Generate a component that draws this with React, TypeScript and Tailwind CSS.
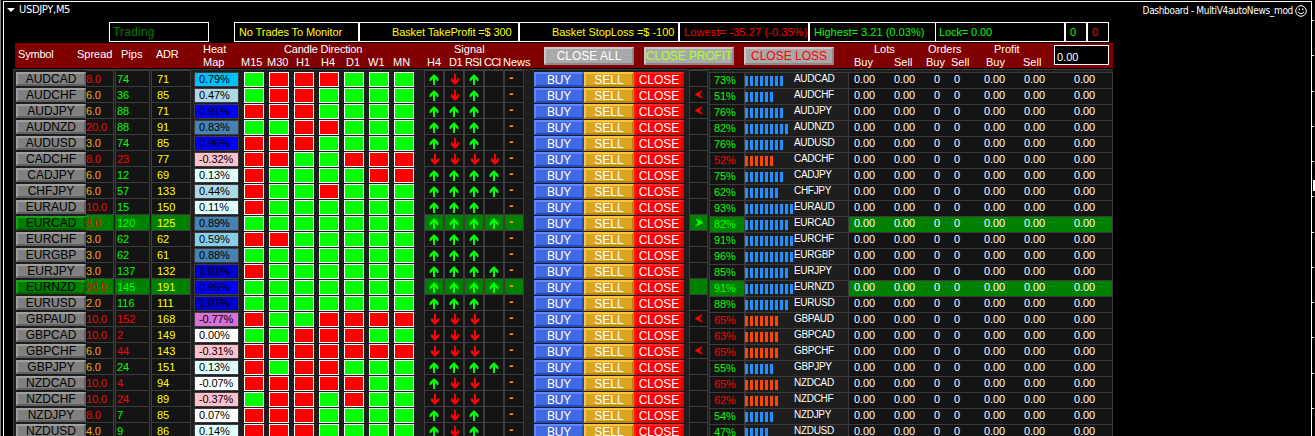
import clsx from 'clsx'

type Dir = 'left' | 'right' | ''

interface Pair {
  symbol: string
  spread: string
  pips: number
  adr: number
  change: string
  heat: string
  candles: string
  signals: string
  strength: number
  down?: boolean
  alert?: Dir
  active?: boolean
}

const HEAT = {
  deepSky: 'bg-[#00bfff]',
  light: 'bg-[#add8e6]',
  sky: 'bg-[#87ceeb]',
  steel: 'bg-[#4682b4]',
  blue: 'bg-[#0000ff]',
  medium: 'bg-[#0000cd]',
  cyan: 'bg-[#e0ffff]',
  pink: 'bg-[#ffc0cb]',
  orchid: 'bg-[#da70d6]',
  white: 'bg-white',
}

const pairs: Pair[] = [
  { symbol: 'AUDCAD', spread: '8.0', pips: 74, adr: 71, change: '0.79%', heat: HEAT.deepSky, candles: 'grrrggg', signals: 'udu', strength: 73 },
  { symbol: 'AUDCHF', spread: '6.0', pips: 36, adr: 85, change: '0.47%', heat: HEAT.light, candles: 'grrgggg', signals: 'udu', strength: 51, alert: 'left' },
  { symbol: 'AUDJPY', spread: '6.0', pips: 88, adr: 71, change: '0.91%', heat: HEAT.blue, candles: 'rrrgggg', signals: 'uuu', strength: 76, alert: 'left' },
  { symbol: 'AUDNZD', spread: '20.0', pips: 88, adr: 91, change: '0.83%', heat: HEAT.steel, candles: 'ggrrggg', signals: 'uuu', strength: 82 },
  { symbol: 'AUDUSD', spread: '3.0', pips: 74, adr: 85, change: '0.96%', heat: HEAT.blue, candles: 'rrrgggg', signals: 'udu', strength: 76 },
  { symbol: 'CADCHF', spread: '8.0', pips: 23, adr: 77, change: '-0.32%', heat: HEAT.pink, candles: 'rrggrrr', signals: 'dddd', strength: 52, down: true },
  { symbol: 'CADJPY', spread: '6.0', pips: 12, adr: 69, change: '0.13%', heat: HEAT.cyan, candles: 'rggggrr', signals: 'uuuu', strength: 75 },
  { symbol: 'CHFJPY', spread: '6.0', pips: 57, adr: 133, change: '0.44%', heat: HEAT.light, candles: 'rggrggg', signals: 'uuuu', strength: 62 },
  { symbol: 'EURAUD', spread: '10.0', pips: 15, adr: 150, change: '0.11%', heat: HEAT.cyan, candles: 'rgggggg', signals: 'uuu', strength: 93 },
  { symbol: 'EURCAD', spread: '8.0', pips: 120, adr: 125, change: '0.89%', heat: HEAT.steel, candles: 'ggggggg', signals: 'uuuu', strength: 82, alert: 'right', active: true },
  { symbol: 'EURCHF', spread: '3.0', pips: 62, adr: 62, change: '0.59%', heat: HEAT.sky, candles: 'rrggggg', signals: 'uuu', strength: 91 },
  { symbol: 'EURGBP', spread: '3.0', pips: 62, adr: 61, change: '0.88%', heat: HEAT.steel, candles: 'ggggggg', signals: 'uuu', strength: 96 },
  { symbol: 'EURJPY', spread: '3.0', pips: 137, adr: 132, change: '1.01%', heat: HEAT.medium, candles: 'rgggggg', signals: 'uuuu', strength: 85 },
  { symbol: 'EURNZD', spread: '20.0', pips: 145, adr: 191, change: '0.95%', heat: HEAT.blue, candles: 'ggggggg', signals: 'uuuu', strength: 91, active: true },
  { symbol: 'EURUSD', spread: '2.0', pips: 116, adr: 111, change: '1.07%', heat: HEAT.medium, candles: 'ggggggg', signals: 'uuu', strength: 88 },
  { symbol: 'GBPAUD', spread: '10.0', pips: 152, adr: 168, change: '-0.77%', heat: HEAT.orchid, candles: 'rggrrrr', signals: 'ddd', strength: 65, down: true, alert: 'left' },
  { symbol: 'GBPCAD', spread: '10.0', pips: 2, adr: 149, change: '0.00%', heat: HEAT.white, candles: 'ggrrrgg', signals: 'ddd', strength: 63, down: true },
  { symbol: 'GBPCHF', spread: '6.0', pips: 44, adr: 143, change: '-0.31%', heat: HEAT.pink, candles: 'rrrrrrr', signals: 'ddd', strength: 65, down: true, alert: 'left' },
  { symbol: 'GBPJPY', spread: '6.0', pips: 24, adr: 151, change: '0.13%', heat: HEAT.cyan, candles: 'rgrrggg', signals: 'uuuu', strength: 55 },
  { symbol: 'NZDCAD', spread: '10.0', pips: 4, adr: 94, change: '-0.07%', heat: HEAT.white, candles: 'rrrrrgg', signals: 'udd', strength: 65, down: true },
  { symbol: 'NZDCHF', spread: '10.0', pips: 24, adr: 89, change: '-0.37%', heat: HEAT.pink, candles: 'grrgrgg', signals: 'ddd', strength: 62, down: true },
  { symbol: 'NZDJPY', spread: '8.0', pips: 7, adr: 85, change: '0.07%', heat: HEAT.white, candles: 'rrrgggg', signals: 'udu', strength: 54 },
  { symbol: 'NZDUSD', spread: '4.0', pips: 9, adr: 86, change: '0.14%', heat: HEAT.cyan, candles: 'rrrgggg', signals: 'udu', strength: 47 },
]

const timeframes = [
  ['M15', 'w-[26px]'],
  ['M30', 'w-[29px]'],
  ['H1', 'w-[25px]'],
  ['H4', 'w-[25px]'],
  ['D1', 'w-[22px]'],
  ['W1', 'w-[25px]'],
  ['MN', ''],
]

const signalHeads = [
  ['H4', 'w-[22px]'],
  ['D1', 'w-[16px] tracking-[-0.5px]'],
  ['RSI', 'w-[19px] tracking-[-0.6px]'],
  ['CCI', 'w-[19px] tracking-[-0.8px]'],
  ['News', ''],
]

const totals = [
  ['0.00', 'w-[40px]'],
  ['0.00', 'w-[40px]'],
  ['0', 'w-[20px]'],
  ['0', 'w-[30px]'],
  ['0.00', 'w-[40px]'],
  ['0.00', 'w-[50px]'],
  ['0.00', ''],
]

function SignalArrow({ dir }: { dir: string }) {
  if (dir === 'u') {
    return (
      <svg width="10" height="11" viewBox="0 0 10 11" className="ml-[4px] mt-[3px]" fill="#00ff00">
        <path d="M5 0 L9.4 4.6 V7 H8.2 L6 4.8 V11 H4 V4.8 L1.8 7 H0.6 V4.6 Z" />
      </svg>
    )
  }
  return (
    <svg width="10" height="11" viewBox="0 0 10 11" className="ml-[5px] mt-[3px]" fill="#ff0000">
      <path d="M5 11 L9.2 6.8 V4.2 H8 L6 6.2 V0 H4 V6.2 L2 4.2 H0.8 V6.8 Z" />
    </svg>
  )
}

function AlertArrow({ dir }: { dir: Dir }) {
  return (
    <svg
      width="8"
      height="9"
      viewBox="0 0 8 9"
      className={clsx('ml-[5px] mt-[3px]', dir === 'right' ? 'fill-[#00ff00]' : 'rotate-180 fill-[#ff0000]')}
    >
      <path d="M0 0 L8 4.1 V4.9 L0 9 L2.8 4.9 V4.1 Z" />
    </svg>
  )
}

function HeadGroup({ title, titleClass, items, className }: { title: string; titleClass: string; items: string[][]; className: string }) {
  return (
    <div className={clsx('shrink-0 leading-[13px]', className)}>
      <div className={titleClass}>{title}</div>
      <div className="flex">
        {items.map(([label, width], i) => (
          <span key={i} className={clsx('shrink-0', width)}>{label}</span>
        ))}
      </div>
    </div>
  )
}

const bevel = 'flex shrink-0 items-center justify-center border-2 text-[12px] leading-none'

function Row({ pair }: { pair: Pair }) {
  const cellBg = pair.active ? 'bg-[#008000]' : 'bg-[#141414]'
  const trend = pair.down ? 'text-[#ff0000]' : 'text-[#00ff00]'
  const bars = Math.floor(pair.strength / 10) + 1

  return (
    <div className="flex h-4 shrink-0 items-start text-[11px] leading-[17px]">
      <button
        className={clsx(
          bevel,
          'ml-[2px] mt-[2px] h-[14px] w-[70px] text-black',
          pair.active
            ? 'border-b-[#006000] border-l-[#20a020] border-r-[#006000] border-t-[#20a020] bg-[#008000]'
            : 'border-b-[#606060] border-l-[#a0a0a0] border-r-[#606060] border-t-[#a0a0a0] bg-[#808080]'
        )}
      >
        {pair.symbol}
      </button>
      <div className={clsx('h-4 w-[28px] shrink-0 border-r border-t border-[#3c3c3c] tracking-[-0.2px]', cellBg, parseFloat(pair.spread) >= 8 ? 'text-[#ff0000]' : 'text-[#ffa500]')}>
        {pair.spread}
      </div>
      <div className={clsx('ml-px h-4 w-[35px] shrink-0 border-x border-t border-[#3c3c3c] pl-px', cellBg, trend)}>{pair.pips}</div>
      <div className={clsx('ml-px h-4 w-[40px] shrink-0 border-x border-t border-[#3c3c3c] pl-[5px] text-[#ffff00]', cellBg)}>{pair.adr}</div>
      <div className={clsx('ml-[3px] mt-[2px] h-[15px] w-[45px] shrink-0 border border-[#3c3c3c] pl-[4px] leading-[13px] tracking-[-0.1px] text-black', pair.heat)}>
        {pair.change}
      </div>

      {/* Candle direction */}
      <div className="ml-[5px] mt-[2px] flex shrink-0 gap-[5px]">
        {pair.candles.split('').map((c, i) => (
          <div key={i} className={clsx('h-[15px] w-[20px] border border-white', c === 'g' ? 'bg-[#00ff00]' : 'bg-[#ff0000]')} />
        ))}
      </div>

      {/* Signals and news */}
      <div className="ml-[10px] flex shrink-0">
        {[0, 1, 2, 3].map((i) => (
          <div key={i} className={clsx('h-4 w-[20px] border-x border-t border-[#3c3c3c]', cellBg)}>
            {pair.signals[i] && <SignalArrow dir={pair.signals[i]} />}
          </div>
        ))}
        <div className={clsx('h-4 w-[20px] border-x border-t border-[#3c3c3c] pl-[4px] text-[13px] font-bold leading-[13px] text-[#ffa500]', cellBg)}>-</div>
      </div>

      <div className="ml-[10px] mt-[2px] flex shrink-0 text-white">
        <button className={clsx(bevel, 'h-[15px] w-[50px] border-b-[#2149c1] border-l-[#6189ff] border-r-[#2149c1] border-t-[#6189ff] bg-[#4169e1] tracking-[-0.3px]')}>BUY</button>
        <button className={clsx(bevel, 'h-[15px] w-[50px] border-b-[#ba8500] border-l-[#fac540] border-r-[#ba8500] border-t-[#fac540] bg-[#daa520]')}>SELL</button>
        <button className={clsx(bevel, 'h-[15px] w-[50px] border-b-[#df0000] border-l-[#ff2020] border-r-[#df0000] border-t-[#ff2020] bg-[#ff0000]')}>CLOSE</button>
      </div>

      <div className={clsx('ml-[5px] h-4 w-[19px] shrink-0 border-x border-t border-[#3c3c3c]', cellBg)}>
        {pair.alert && <AlertArrow dir={pair.alert} />}
      </div>

      {/* Strength */}
      <div className={clsx('ml-px mt-[2px] h-4 w-[36px] shrink-0 border-x border-t border-[#3c3c3c] pl-[4px] leading-[15px] tracking-[-0.1px]', cellBg, trend)}>
        {pair.strength}%
      </div>
      <div className="mt-[2px] flex h-4 w-[103px] shrink-0 border-l border-t border-[#3c3c3c]">
        <div className="-ml-px flex w-[49px] shrink-0 gap-[2px] pt-[3px]">
          {Array.from({ length: bars }, (_, i) => (
            <div key={i} className={clsx('h-[10px] w-[3px] shrink-0', pair.down ? 'bg-[#ff4500]' : 'bg-[#1e90ff]')} />
          ))}
        </div>
        <span className="text-[10px] leading-[11px] tracking-[-0.3px] text-white">{pair.symbol}</span>
      </div>

      <div className={clsx('mt-[2px] flex h-4 w-[265px] shrink-0 border-x border-t border-[#3c3c3c] pl-[5px] leading-[13px] tracking-[-0.1px] text-white', cellBg)}>
        {totals.map(([value, width], i) => (
          <span key={i} className={clsx('shrink-0', width)}>{value}</span>
        ))}
      </div>
    </div>
  )
}

export default function App() {
  const stat = 'h-[20px] shrink-0 border border-white whitespace-nowrap leading-[18px]'
  const grayBevel = 'h-[18px] w-[90px] border-b-[#898989] border-l-[#c9c9c9] border-r-[#898989] border-t-[#c9c9c9] bg-[#a9a9a9] whitespace-nowrap'

  return (
    <div className="flex h-[436px] w-[1315px] overflow-hidden bg-black font-['Liberation_Sans',Arial,sans-serif] text-[11px] text-white">
      <div className="w-px shrink-0 bg-[#808080]" />

      <div className="ml-[2px] mt-px flex h-[440px] w-[1309px] shrink-0 flex-col border-x border-t border-white">
        {/* Chart caption */}
        <div className="flex h-[20px] shrink-0 items-start font-['DejaVu_Sans_Condensed','DejaVu_Sans',sans-serif] text-[11px] leading-[15px]">
          <svg width="8" height="4" viewBox="0 0 8 4" className="ml-[3px] mt-[6px]" fill="white">
            <path d="M0 0 H8 L4 4 Z" />
          </svg>
          <span className="ml-[4px] tracking-[-0.3px]">USDJPY,M5</span>
          <span className="ml-auto mt-px text-[10px] tracking-[-0.33px]">Dashboard - MultiV4autoNews_mod</span>
          <svg width="12" height="12" viewBox="0 0 12 12" className="ml-[2px] mr-[4px] mt-[3px]" fill="none" stroke="white">
            <circle cx="6" cy="6" r="5.3" />
            <path d="M3 7 Q6 10.4 9 7" />
            <path d="M4.3 3.5 V5.2 M7.7 3.5 V5.2" strokeWidth="1.3" />
          </svg>
        </div>

        {/* Account strip */}
        <div className="flex h-[21px] shrink-0 pl-[105px] text-[#ffff00]">
          <div className={clsx(stat, 'mr-[25px] w-[100px] pl-[3px] text-[12px] tracking-[0.2px] text-[#008000]')}>Trading</div>
          <div className={clsx(stat, 'w-[125px] pl-[4px] tracking-[-0.1px]')}>No Trades To Monitor</div>
          <div className={clsx(stat, 'w-[160px] pl-[32px] tracking-[-0.12px]')}>Basket TakeProfit =$ 300</div>
          <div className={clsx(stat, 'w-[160px] pl-[32px] tracking-[-0.04px]')}>Basket StopLoss =$ -100</div>
          <div className={clsx(stat, 'w-[130px] pl-[4px] tracking-[0.12px] text-[#ff0000]')}>Lowest= -35.27 (-0.35%)</div>
          <div className={clsx(stat, 'w-[127px] pl-[4px] tracking-[0.03px] text-[#00ff00]')}>Highest= 3.21 (0.03%)</div>
          <div className={clsx(stat, 'w-[129px] border-l-0 pl-[3px] tracking-[-0.1px] text-[#00ff00]')}>Lock= 0.00</div>
          <div className={clsx(stat, 'w-[22px] pl-[4px] text-[#00ff00]')}>0</div>
          <div className={clsx(stat, 'w-[22px] pl-[4px] text-[#ff0000]')}>0</div>
        </div>

        {/* Column headers */}
        <div className="ml-[11px] flex h-[25px] w-[1098px] shrink-0 bg-[#800000] leading-[23px]">
          <span className="w-[62px] shrink-0 pl-[3px] tracking-[-0.2px]">Symbol</span>
          <span className="w-[44px] shrink-0">Spread</span>
          <span className="w-[35px] shrink-0">Pips</span>
          <span className="w-[47px] shrink-0 tracking-[-0.3px]">ADR</span>
          <HeadGroup title="Heat" titleClass="" items={[['Map', '']]} className="w-[38px]" />
          <HeadGroup title="Candle Direction" titleClass="pl-[43px] tracking-[-0.2px]" items={timeframes} className="w-[186px]" />
          <HeadGroup title="Signal" titleClass="pl-[27px]" items={signalHeads} className="w-[117px]" />
          <div className="mr-[20px] mt-[4px] flex shrink-0 gap-[10px]">
            <button className={clsx(bevel, grayBevel, 'text-white')}>CLOSE ALL</button>
            <button className={clsx(bevel, grayBevel, 'tracking-[-0.15px] text-[#adff2f]')}>CLOSE PROFIT</button>
            <button className={clsx(bevel, grayBevel, 'text-[#ff0000]')}>CLOSE LOSS</button>
          </div>
          <HeadGroup title="Lots" titleClass="pl-[20px]" items={[['Buy', 'w-[40px]'], ['Sell', '']]} className="w-[72px]" />
          <HeadGroup title="Orders" titleClass="pl-[2px]" items={[['Buy', 'w-[25px]'], ['Sell', '']]} className="w-[60px]" />
          <HeadGroup title="Profit" titleClass="pl-[8px]" items={[['Buy', 'w-[37px]'], ['Sell', '']]} className="w-[68px]" />
          <div className="mt-[2px] h-[20px] w-[55px] shrink-0 border border-white bg-black pl-[2px] leading-[22px]">0.00</div>
        </div>

        {/* Pairs */}
        <div className="ml-[9px] mt-px flex w-[1100px] shrink-0 flex-col border-l border-t border-[#3c3c3c] bg-[#1e1e1e]">
          {pairs.map((pair) => (
            <Row key={pair.symbol} pair={pair} />
          ))}
        </div>
      </div>

      {/* Price scale */}
      <div className="relative flex h-[409px] w-[3px] shrink-0 flex-col justify-between pt-[20px]">
        {Array.from({ length: 12 }, (_, i) => (
          <div key={i} className="h-px w-[2px] bg-white" />
        ))}
        <div className="absolute left-px top-[180px] h-[11px] w-[2px] bg-white" />
      </div>
    </div>
  )
}
